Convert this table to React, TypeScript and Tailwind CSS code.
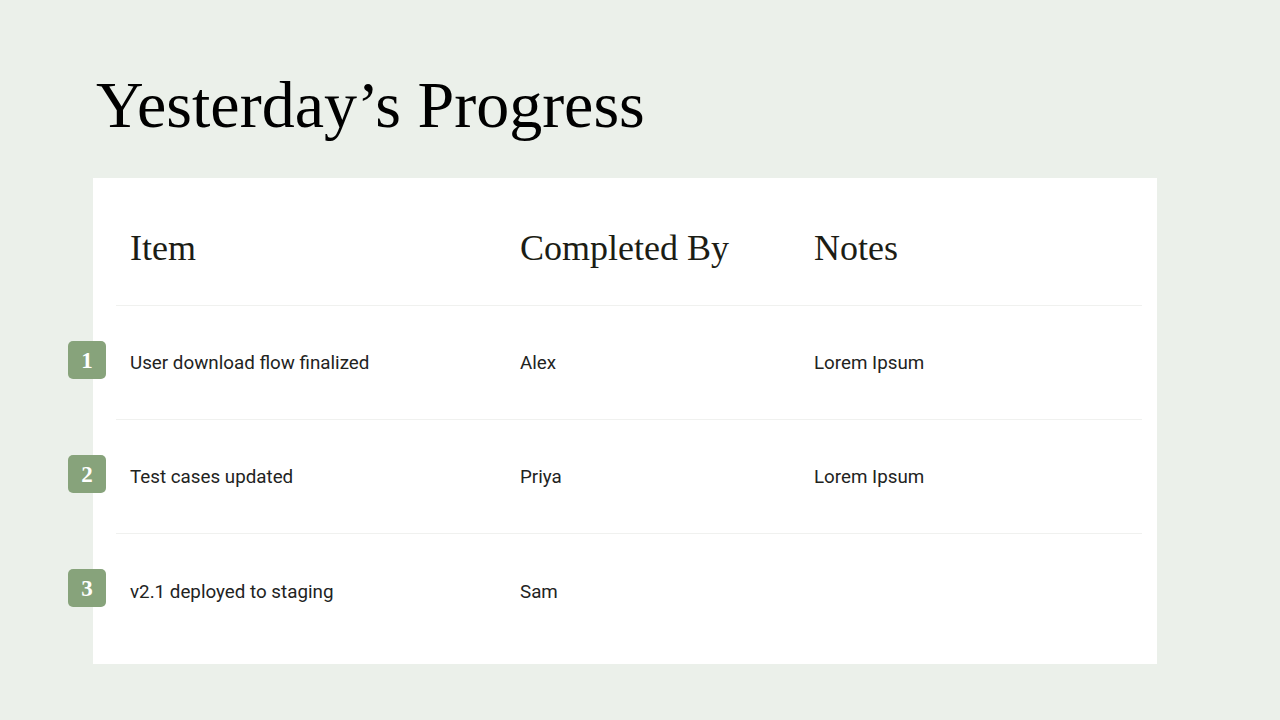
const rows = [
  { n: "1", item: "User download flow finalized", by: "Alex", notes: "Lorem Ipsum" },
  { n: "2", item: "Test cases updated", by: "Priya", notes: "Lorem Ipsum" },
  { n: "3", item: "v2.1 deployed to staging", by: "Sam", notes: "" },
];

const serif = "font-['Liberation_Serif','DejaVu_Serif',serif]";

export default function App() {
  return (
    <div className="w-[1280px] h-[720px] bg-[#ebf0ea] pl-[93px] pt-[66px] overflow-hidden">
      <h1 className={`${serif} text-[66px] leading-none text-black pl-[3px] h-[112px] pt-[6px]`}>
        Yesterday’s Progress
      </h1>

      <div className="w-[1064px] h-[486px] bg-white pl-[23px] pr-[15px] pt-[23px] pb-[17px]">
        {/* header */}
        <div className="grid grid-cols-[390px_294px_1fr] pl-[14px] pt-[29px] pb-[39px] border-b border-[#f0f1ef]">
          <div className={`${serif} text-[36px] leading-none text-[#1c1d15]`}>Item</div>
          <div className={`${serif} text-[36px] leading-none text-[#1c1d15]`}>Completed By</div>
          <div className={`${serif} text-[36px] leading-none text-[#1c1d15]`}>Notes</div>
        </div>

        {rows.map((r, i) => (
          <div
            key={i}
            className={`relative grid grid-cols-[390px_294px_1fr] items-center pl-[14px] h-[114px] font-['Roboto',sans-serif] text-[18.8px] text-[#22231e] ${
              i < rows.length - 1 ? "border-b border-[#f0f1ef]" : ""
            }`}
          >
            <div className="absolute left-[-48px] top-[35px] w-[38px] h-[38px] rounded-[5px] bg-[#87a37b] flex items-center justify-center">
              <span className={`${serif} font-bold text-white text-[23px] leading-none`}>{r.n}</span>
            </div>
            <div className="pt-[2px]">{r.item}</div>
            <div className="pt-[2px]">{r.by}</div>
            <div className="pt-[2px]">{r.notes}</div>
          </div>
        ))}
      </div>
    </div>
  );
}
